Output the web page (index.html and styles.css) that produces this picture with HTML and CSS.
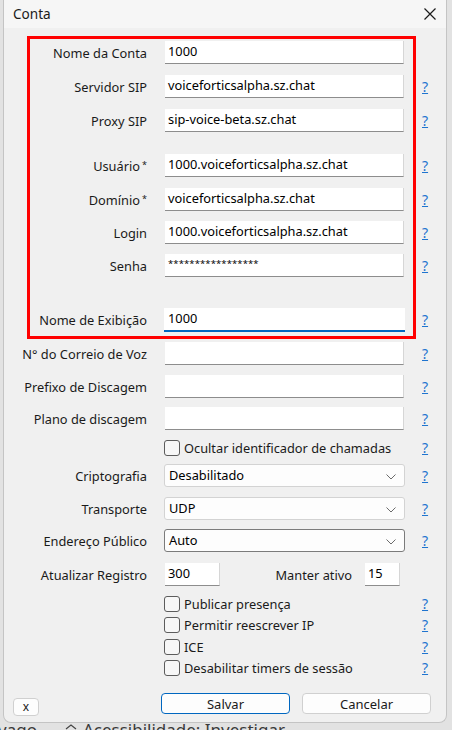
FILE: index.html
```html
<!DOCTYPE html>
<html lang="pt-BR">
<head>
<meta charset="utf-8">
<title>Conta</title>
<link rel="stylesheet" href="styles.css">
</head>
<body>
<div class="screen">
  <div class="dialog">
    <div class="titlebar">
      <span class="title">Conta</span>
      <span class="close">
        <svg width="14" height="14" viewBox="0 0 14 14"><path d="M1.5 1.5 L12.5 12.5 M12.5 1.5 L1.5 12.5" stroke="#1b1b1b" stroke-width="1.2" fill="none"/></svg>
      </span>
    </div>
    <div class="form">
      <div class="row r-first"><span class="lbl">Nome da Conta</span><div class="field">1000</div><span></span></div>
      <div class="row"><span class="lbl">Servidor SIP</span><div class="field">voiceforticsalpha.sz.chat</div><a class="help">?</a></div>
      <div class="row"><span class="lbl">Proxy SIP</span><div class="field">sip-voice-beta.sz.chat</div><a class="help">?</a></div>
      <div class="row r-group"><span class="lbl">Usuário<sup>*</sup></span><div class="field">1000.voiceforticsalpha.sz.chat</div><a class="help">?</a></div>
      <div class="row"><span class="lbl">Domínio<sup>*</sup></span><div class="field">voiceforticsalpha.sz.chat</div><a class="help">?</a></div>
      <div class="row r-tight"><span class="lbl">Login</span><div class="field">1000.voiceforticsalpha.sz.chat</div><a class="help">?</a></div>
      <div class="row r-tight"><span class="lbl">Senha</span><div class="field pwd">*****************</div><a class="help">?</a></div>
      <div class="row r-display"><span class="lbl">Nome de Exibição</span><div class="field focused">1000</div><a class="help">?</a></div>
      <div class="row r-tight"><span class="lbl">N° do Correio de Voz</span><div class="field"></div><a class="help">?</a></div>
      <div class="row r-tight"><span class="lbl">Prefixo de Discagem</span><div class="field"></div><a class="help">?</a></div>
      <div class="row r-9"><span class="lbl">Plano de discagem</span><div class="field"></div><a class="help">?</a></div>
      <div class="row check-row r-9"><span></span><label class="chk"><span class="box"></span>Ocultar identificador de chamadas</label><a class="help">?</a></div>
      <div class="row r-9"><span class="lbl">Criptografia</span><div class="select">Desabilitado<svg class="chev" width="10" height="6" viewBox="0 0 10 6"><path d="M0.5 0.5 L5 5 L9.5 0.5" stroke="#6b6b6b" stroke-width="1" fill="none"/></svg></div><a class="help">?</a></div>
      <div class="row r-tight"><span class="lbl">Transporte</span><div class="select">UDP<svg class="chev" width="10" height="6" viewBox="0 0 10 6"><path d="M0.5 0.5 L5 5 L9.5 0.5" stroke="#6b6b6b" stroke-width="1" fill="none"/></svg></div><a class="help">?</a></div>
      <div class="row r-9"><span class="lbl">Endereço Público</span><div class="select active">Auto<svg class="chev" width="10" height="6" viewBox="0 0 10 6"><path d="M0.5 0.5 L5 5 L9.5 0.5" stroke="#6b6b6b" stroke-width="1" fill="none"/></svg></div><a class="help">?</a></div>
      <div class="row r-11"><span class="lbl">Atualizar Registro</span>
        <div class="pair">
          <div class="field small">300</div>
          <span class="lbl2">Manter ativo</span>
          <div class="field tiny">15</div>
        </div>
        <span></span>
      </div>
      <div class="checks">
        <div class="row check-row cr"><span></span><label class="chk"><span class="box"></span>Publicar presença</label><a class="help">?</a></div>
        <div class="row check-row cr"><span></span><label class="chk"><span class="box"></span>Permitir reescrever IP</label><a class="help">?</a></div>
        <div class="row check-row cr cr-1"><span></span><label class="chk"><span class="box"></span>ICE</label><a class="help">?</a></div>
        <div class="row check-row cr"><span></span><label class="chk"><span class="box"></span>Desabilitar timers de sessão</label><a class="help">?</a></div>
      </div>
    </div>
    <div class="footer">
      <button class="btn btn-x">x</button>
      <div class="actions">
        <button class="btn btn-primary">Salvar</button>
        <button class="btn">Cancelar</button>
      </div>
    </div>
    <div class="highlight"></div>
  </div>
  <div class="behind">
    <span class="b1">vago</span>
    <svg class="b-icon" width="12" height="12" viewBox="0 0 12 12"><path d="M1 5 L6 1 L11 5" stroke="#444" stroke-width="1.2" fill="none"/></svg>
    <span class="b2">Acessibilidade: Investigar</span>
  </div>
</div>
</body>
</html>
```

FILE: styles.css
```css
html, body {
  margin: 0;
  padding: 0;
}
body {
  background: #e2e2e2;
  font-family: "Noto Sans", "Open Sans", sans-serif;
  font-size: 12.8px;
  color: #1a1a1a;
}
.screen {
  width: 452px;
  height: 730px;
  overflow: hidden;
  position: relative;
}
.dialog {
  position: relative;
  margin-left: 3px;
  width: 444px;
  height: 723px;
  box-sizing: border-box;
  border: 1px solid #c4c4c4;
  border-top: none;
  border-radius: 0 0 8px 8px;
  background: #f0f0f0;
  overflow: hidden;
}
.titlebar {
  height: 28px;
  background: #f6f6f6;
  display: flex;
  align-items: center;
  justify-content: space-between;
  padding: 0 9px 2px 9px;
  box-sizing: border-box;
}
.title {
  font-size: 13.6px;
  color: #1a1a1a;
}
.close {
  display: flex;
  margin-top: 1px;
}
.form {
  padding-top: 13px;
}
.row {
  display: grid;
  grid-template-columns: 143px 239px 10px;
  column-gap: 18px;
  height: 23px;
  align-items: center;
  margin-top: 11px;
}
.row.r-first { margin-top: 0; }
.row.r-group { margin-top: 22px; }
.row.r-tight { margin-top: 10px; }
.row.r-display { margin-top: 31px; height: 24px; }
.row.r-9 { margin-top: 9px; }
.row.r-11 { margin-top: 11px; }
.lbl {
  text-align: right;
  white-space: nowrap;
}
.lbl sup {
  font-size: 9px;
  vertical-align: 0;
  position: relative;
  top: -3px;
  margin-left: 2px;
}
.field {
  height: 23px;
  box-sizing: border-box;
  background: #ffffff;
  border-right: 1px solid #d6d6d6;
  border-bottom: 1px solid #8d8d8d;
  padding: 1px 0 0 3px;
  color: #000;
  white-space: nowrap;
  overflow: hidden;
}
.field.pwd {
  font-size: 9.5px;
  letter-spacing: 0.1px;
  padding-top: 3px;
}
.field.focused {
  height: 24px;
  border-bottom: 2px solid #0067c0;
  margin-left: -1px;
  width: 241px;
  border-right: none;
  padding-left: 4px;
}
.help {
  font-size: 14px;
  color: #1f74cf;
  text-decoration: underline;
  line-height: 1;
}
.check-row {
  height: 16px;
}
.chk {
  display: flex;
  align-items: center;
  gap: 4px;
  margin-left: -1px;
  white-space: nowrap;
}
.box {
  width: 16px;
  height: 16px;
  box-sizing: border-box;
  border: 1px solid #5c5c5c;
  border-radius: 3px;
  background: #f7f7f7;
  flex: none;
}
.select {
  position: relative;
  height: 23px;
  margin-left: -1px;
  width: 241px;
  box-sizing: border-box;
  border: 1px solid #d3d3d3;
  border-radius: 3px;
  background: #fdfdfd;
  padding: 1px 0 0 4px;
  color: #000;
  display: flex;
  align-items: flex-start;
  justify-content: space-between;
}
.select.active {
  border-color: #7b7b7b;
}
.chev {
  margin: 8px 8px 0 0;
}
.pair {
  display: flex;
  align-items: center;
}
.field.small {
  width: 55px;
}
.lbl2 {
  text-align: right;
  padding-right: 13px;
  box-sizing: border-box;
  width: 145px;
  white-space: nowrap;
}
.field.tiny {
  width: 35px;
}
.checks {
  margin-top: 7px;
}
.row.cr {
  margin-top: 0;
  height: 21px;
}
.row.cr-1 { margin-top: 1px; }
.footer {
  display: flex;
  justify-content: space-between;
  align-items: flex-start;
  margin-top: 15px;
  padding: 0 15px 0 9px;
}
.actions {
  display: flex;
  gap: 12px;
}
.btn {
  font-family: inherit;
  font-size: 13px;
  color: #1a1a1a;
  background: #fdfdfd;
  border: 1px solid #d0d0d0;
  border-radius: 4px;
  height: 21px;
  width: 129px;
  padding: 0;
  line-height: 18px;
}
.btn-primary {
  border-color: #0067c0;
}
.btn-x {
  width: 26px;
  height: 18px;
  margin-top: 5px;
  font-size: 12px;
  line-height: 14px;
}
.highlight {
  position: absolute;
  left: 23px;
  top: 36px;
  width: 389px;
  height: 303px;
  box-sizing: border-box;
  border: 3px solid #ff0000;
  pointer-events: none;
}
.behind {
  height: 7px;
  overflow: hidden;
  display: flex;
  align-items: flex-start;
  font-size: 17px;
  line-height: 17px;
  color: #3a3a3a;
  padding-top: 1px;
}
.b1 {
  margin-left: -2px;
  margin-top: -3px;
}
.b-icon {
  margin-left: 28px;
}
.b2 {
  margin-left: 6px;
  margin-top: -3px;
}
```
